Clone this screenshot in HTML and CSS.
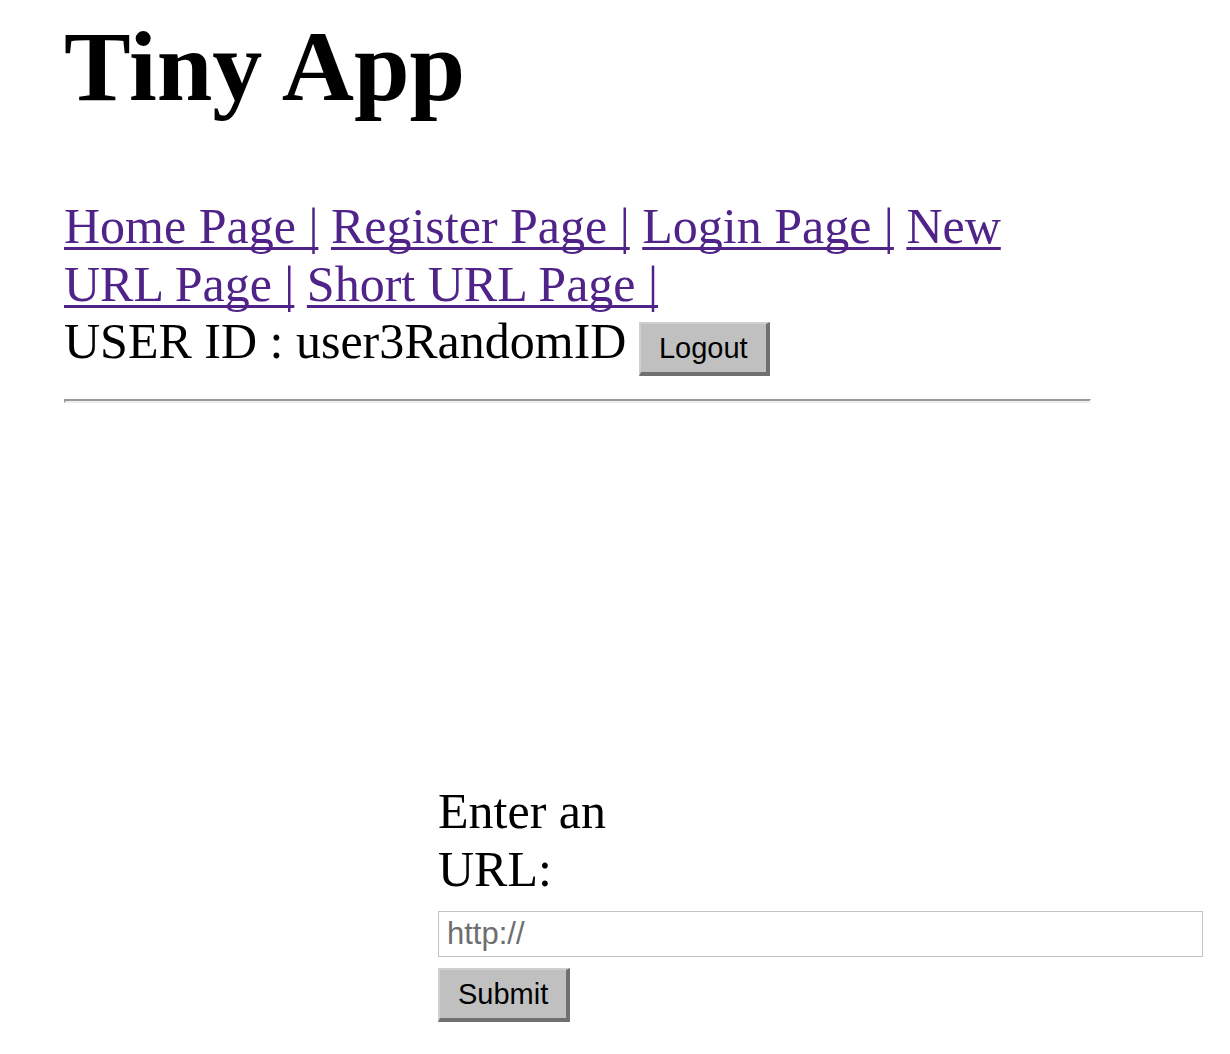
FILE: index.html
```html
<!DOCTYPE html>
<html>
<head>
<meta charset="utf-8">
<title>Tiny App</title>
<link rel="stylesheet" href="styles.css">
</head>
<body>
<div class="page">
  <h1 class="title">Tiny App</h1>
  <nav class="nav">
    <a href="#">Home Page |</a> <a href="#">Register Page |</a> <a href="#">Login Page |</a> <a href="#">New URL Page |</a> <a href="#">Short URL Page |</a><br>
    USER ID : user3RandomID <button class="btn" type="button">Logout</button>
  </nav>
  <hr class="rule">
  <form class="url-form">
    <label class="url-label" for="longURL">Enter an URL:</label>
    <input class="url-input" id="longURL" type="text" placeholder="http://">
    <button class="btn submit" type="submit">Submit</button>
  </form>
</div>
</body>
</html>
```

FILE: styles.css
```css
html, body {
  margin: 0;
  padding: 0;
  background: #fff;
}
body {
  font-family: "Liberation Serif", "Times New Roman", serif;
  font-size: 50px;
  color: #000;
}
.page {
  padding-left: 64px;
}
.title {
  font-size: 100px;
  font-weight: bold;
  margin: 9px 0 0;
  line-height: 115px;
}
.nav {
  width: 1027px;
  margin-top: 74px;
  line-height: 57.5px;
}
.nav a {
  color: #4f2388;
  text-decoration: underline;
  text-decoration-thickness: 3px;
  text-underline-offset: 4px;
  text-decoration-skip-ink: none;
}
.btn {
  font-family: "Liberation Sans", Arial, sans-serif;
  font-size: 29px;
  line-height: 32px;
  padding: 8px 18px;
  margin: 0;
  background: #c0c0c0;
  color: #000;
  border-style: solid;
  border-width: 2px 4px 4px 2px;
  border-color: #cfcfcf #707070 #707070 #cfcfcf;
  border-radius: 0;
  vertical-align: baseline;
}
.rule {
  width: 1027px;
  box-sizing: border-box;
  height: 4px;
  margin: 23px 0 0;
  border-style: solid;
  border-width: 2px;
  border-color: #9a9a9a #eeeeee #eeeeee #9a9a9a;
}
.url-form {
  margin-top: 380px;
  padding-left: 374px;
  display: flex;
  flex-direction: column;
  align-items: flex-start;
}
.url-label {
  width: 200px;
  line-height: 57.5px;
}
.url-input {
  box-sizing: border-box;
  width: 765px;
  height: 46px;
  margin-top: 13px;
  padding: 0 8px;
  border: 1px solid #c4c4c4;
  font-family: "Liberation Sans", Arial, sans-serif;
  font-size: 31px;
  outline: none;
}
.url-input::placeholder {
  color: #6e6e6e;
}
.submit {
  margin-top: 11px;
}
```
